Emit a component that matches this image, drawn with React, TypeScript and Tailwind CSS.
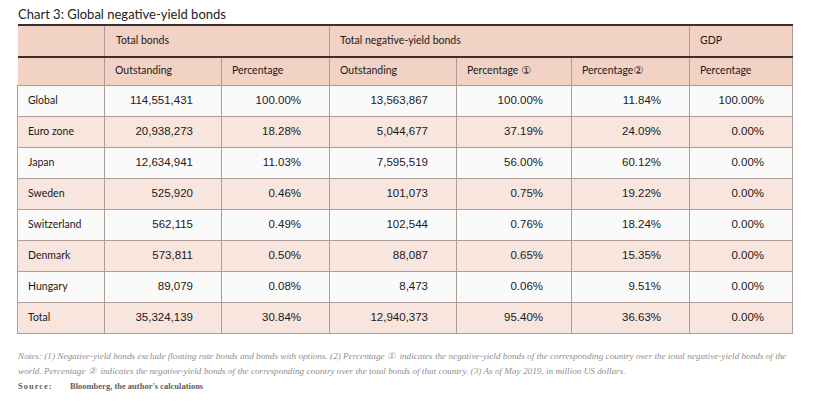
import React from "react";

type Row = {
  name: string;
  vals: string[];
};

const rows: Row[] = [
  { name: "Global", vals: ["114,551,431", "100.00%", "13,563,867", "100.00%", "11.84%", "100.00%"] },
  { name: "Euro zone", vals: ["20,938,273", "18.28%", "5,044,677", "37.19%", "24.09%", "0.00%"] },
  { name: "Japan", vals: ["12,634,941", "11.03%", "7,595,519", "56.00%", "60.12%", "0.00%"] },
  { name: "Sweden", vals: ["525,920", "0.46%", "101,073", "0.75%", "19.22%", "0.00%"] },
  { name: "Switzerland", vals: ["562,115", "0.49%", "102,544", "0.76%", "18.24%", "0.00%"] },
  { name: "Denmark", vals: ["573,811", "0.50%", "88,087", "0.65%", "15.35%", "0.00%"] },
  { name: "Hungary", vals: ["89,079", "0.08%", "8,473", "0.06%", "9.51%", "0.00%"] },
  { name: "Total", vals: ["35,324,139", "30.84%", "12,940,373", "95.40%", "36.63%", "0.00%"] },
];

const colWidths = ["w-[87px]", "w-[117px]", "w-[108px]", "w-[127px]", "w-[115px]", "w-[118px]", "w-[103px]"];

export default function App() {
  return (
    <div className="w-[818px] h-[402px] bg-white overflow-hidden font-['Lato','Liberation_Sans',sans-serif] text-[#1a1a1a]">
      <div className="pl-[18px] pt-[5px] h-[24px] text-[13px] leading-[18px] text-[#222]">
        Chart 3: Global negative-yield bonds
      </div>

      <table className="ml-[17px] border-collapse table-fixed w-[775px] text-[10.5px]">
        <colgroup>
          {colWidths.map((w, i) => (
            <col key={i} className={w} />
          ))}
        </colgroup>
        <thead>
          <tr className="h-[32px] bg-[#f2d2c4] border-t-2 border-t-[#3b2e2c] border-b-2 border-b-[#3b2e2c] text-[10.5px]">
            <th className="border-r border-[#b09c96]" />
            <th colSpan={2} className="border-r border-[#b09c96] text-left font-normal pl-[11px]">
              Total bonds
            </th>
            <th colSpan={3} className="border-r border-[#b09c96] text-left font-normal pl-[10px]">
              Total negative-yield bonds
            </th>
            <th className="border-r border-[#b09c96] text-left font-normal pl-[10px]">GDP</th>
          </tr>
          <tr className="h-[28px] bg-[#f2d2c4] border-b border-b-[#b09c96] text-[10.5px]">
            <th className="border-r border-[#b09c96]" />
            <th className="border-r border-[#b09c96] text-left font-normal pl-[10px]">Outstanding</th>
            <th className="border-r border-[#b09c96] text-left font-normal pl-[10px]">Percentage</th>
            <th className="border-r border-[#b09c96] text-left font-normal pl-[10px]">Outstanding</th>
            <th className="border-r border-[#b09c96] text-left font-normal pl-[10px]">
              Percentage <span className="font-['DejaVu_Sans',sans-serif] text-[11px]">①</span>
            </th>
            <th className="border-r border-[#b09c96] text-left font-normal pl-[10px]">
              Percentage<span className="font-['DejaVu_Sans',sans-serif] text-[11px]">②</span>
            </th>
            <th className="border-r border-[#b09c96] text-left font-normal pl-[10px]">Percentage</th>
          </tr>
        </thead>
        <tbody>
          {rows.map((r, i) => (
            <tr
              key={r.name}
              className={`h-[31px] border-b border-b-[#b09c96] ${i % 2 === 0 ? "bg-[#fbfafa]" : "bg-[#f8e5de]"}`}
            >
              <td className="border-l border-r border-[#b09c96] pl-[10px]">{r.name}</td>
              {r.vals.map((v, j) => (
                <td
                  key={j}
                  className="border-r border-[#b09c96] text-right pr-[28px] font-['Liberation_Sans',sans-serif] text-[11.5px]"
                >
                  {v}
                </td>
              ))}
            </tr>
          ))}
        </tbody>
      </table>

      <div className="pl-[18px] pt-[15px] font-['Liberation_Serif',serif] text-[9.2px] leading-[15px] text-[#8e8e8e] whitespace-nowrap">
        <p className="italic">
          Notes: (1) Negative-yield bonds exclude floating rate bonds and bonds with options. (2) Percentage ①&nbsp; indicates
          the negative-yield bonds of the corresponding country over the total negative-yield bonds of the
        </p>
        <p className="italic">
          world. Percentage ②&nbsp; indicates the negative-yield bonds of the corresponding country over the total bonds of
          that country. (3) As of May 2019, in million US dollars.
        </p>
        <p className="text-[#5e5e5e] font-semibold text-[8.5px]">
          <span className="inline-block w-[52px] tracking-[1px]">Source:</span>Bloomberg, the author's calculations
        </p>
      </div>
    </div>
  );
}
